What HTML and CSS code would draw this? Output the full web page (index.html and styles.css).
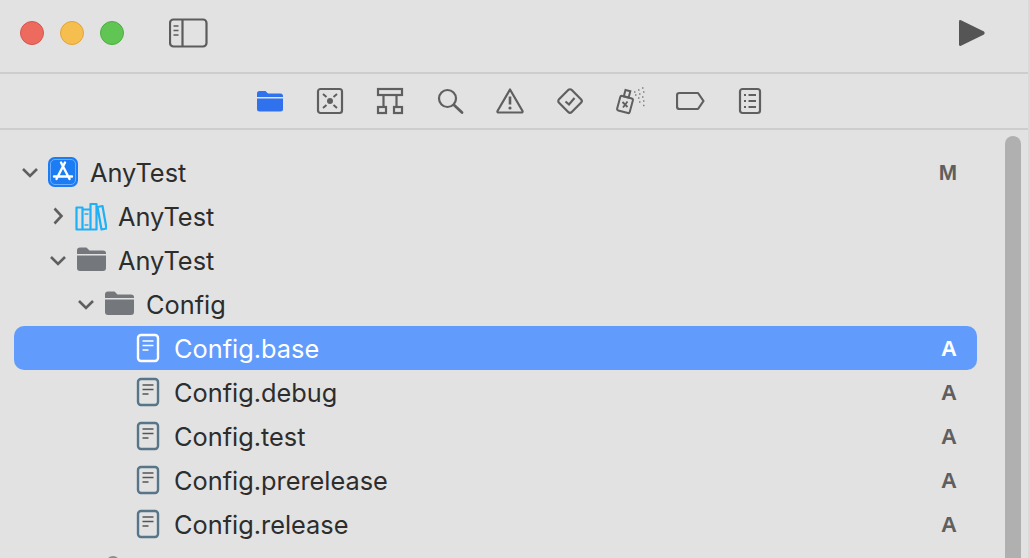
FILE: index.html
```html
<!DOCTYPE html>
<html lang="en">
<head>
<meta charset="utf-8">
<title>AnyTest</title>
<link rel="stylesheet" href="styles.css">
</head>
<body>
<div class="window">
  <header class="titlebar">
    <div class="lights">
      <span class="light red"></span>
      <span class="light yellow"></span>
      <span class="light green"></span>
    </div>
    <svg class="sidebar-toggle" width="40" height="32" viewBox="0 0 40 32" fill="none" stroke="#5c5c5c">
      <rect x="1" y="2.500" width="36.500" height="27" rx="3.500" stroke-width="2.200"/>
      <path d="M13.500 3v26" stroke-width="2.200"/>
      <path d="M4.500 9h5M4.500 13.500h5M4.500 18h5" stroke-width="1.500"/>
    </svg>
    <svg class="play" width="28" height="30" viewBox="0 0 28 30">
      <path d="M1 3.500Q1 1.500 3 2.200L26 13.400Q27.500 15 26 16.500L3 27.800Q1 28.500 1 26.500Z" fill="#555"/>
    </svg>
  </header>
  <nav class="tabs">
    <svg width="28" height="24" viewBox="0 0 28 24"><path d="M1 4.500Q1 2 3.500 2H9.500L12 4.500H24.500Q27 4.500 27 7V8H1Z" fill="#3072ee"/><path d="M1 9.500H27V20Q27 22.500 24.500 22.500H3.500Q1 22.500 1 20Z" fill="#3072ee"/></svg>
    <svg width="28" height="28" viewBox="0 0 28 28" fill="none" stroke="#5f5f5f" stroke-width="2.200"><rect x="2" y="2" width="24" height="24" rx="2.500"/><circle cx="14" cy="14" r="3" fill="#5f5f5f" stroke="none"/><path d="M7 7l3.500 3M21 7l-3.500 3M7 21l3.500-3M21 21l-3.500-3" stroke-width="2"/></svg>
    <svg width="28" height="28" viewBox="0 0 28 28" fill="none" stroke="#5f5f5f" stroke-width="2.200"><rect x="2" y="2" width="24" height="6"/><path d="M7.500 8v12M20.500 8v12"/><rect x="2" y="20" width="8" height="6"/><rect x="18" y="20" width="8" height="6"/></svg>
    <svg width="28" height="28" viewBox="0 0 28 28" fill="none" stroke="#5f5f5f" stroke-width="2.200"><circle cx="11.500" cy="11.500" r="8.500"/><path d="M18 18l8 7.500" stroke-linecap="round" stroke-width="2.800"/></svg>
    <svg width="28" height="28" viewBox="0 0 28 28" fill="none" stroke="#5f5f5f" stroke-width="2.200"><path d="M14 2.500L26.500 24Q27 25.500 25 25.500H3Q1 25.500 1.500 24Z" stroke-linejoin="round"/><path d="M14 9.500v8" stroke-width="2.600"/><circle cx="14" cy="21" r="1.600" fill="#5f5f5f" stroke="none"/></svg>
    <svg width="28" height="28" viewBox="0 0 28 28" fill="none" stroke="#5f5f5f" stroke-width="2.200"><rect x="5" y="5" width="18" height="18" rx="2.500" transform="rotate(45 14 14)"/><path d="M9.500 14.500l3.500 3 5.500-6.500" stroke-width="2.200"/></svg>
    <svg width="30" height="28" viewBox="0 0 30 28" fill="none" stroke="#5f5f5f" stroke-width="2"><rect x="2.500" y="10" width="13" height="15" rx="1.500" transform="rotate(15 9 17.500)"/><rect x="8.500" y="3.500" width="5" height="6.500" transform="rotate(15 11 7)"/><path d="M6.500 15l5 5M11.500 14.500l-4.500 6" stroke-width="1.800"/><path d="M18 5h1.500M22 3h1.500M26 1h1.500M19 8h1.500M23 7h1.500M27 5h1.500M22 11h1.500M26 10h1.500M23 15h1.500M27 14h1.500M27 18.500h1.500" stroke="#808080" stroke-width="1.500"/></svg>
    <svg class="tab-tight" width="30" height="20" viewBox="0 0 30 20" fill="none" stroke="#5f5f5f" stroke-width="2.200"><path d="M3.500 2H22L27.500 10L22 18H3.500Q1 18 1 15.500V4.500Q1 2 3.500 2Z" stroke-linejoin="round"/></svg>
    <svg width="24" height="28" viewBox="0 0 24 28" fill="none" stroke="#5f5f5f" stroke-width="2.200"><rect x="2" y="2" width="20" height="24" rx="2.500"/><path d="M6 8h2M10.500 8H18M6 14h2M10.500 14H18M6 20h2M10.500 20H18" stroke-width="1.800"/></svg>
  </nav>
  <main class="tree">
    <div class="row depth-0">
      <svg class="chev" width="20" height="20" viewBox="0 0 20 20"><path d="M3 7l7 7 7-7" fill="none" stroke="#5f5f5f" stroke-width="2.600"/></svg>
      <svg class="icon" width="32" height="32" viewBox="0 0 32 32"><rect x="1" y="1" width="30" height="30" rx="6.500" fill="#1c7cf4"/><rect x="3.500" y="3.500" width="25" height="25" rx="4.500" fill="none" stroke="#6fadfa" stroke-width="1"/><path d="M18 6.500L9.500 23M14 6.500L22.500 23M7 20.500H25" fill="none" stroke="#fff" stroke-width="2.400" stroke-linecap="round"/></svg>
      <span class="name">AnyTest</span><span class="badge">M</span>
    </div>
    <div class="row depth-1">
      <svg class="chev" width="20" height="20" viewBox="0 0 20 20"><path d="M6.500 2.500l7 7.500-7 7.500" fill="none" stroke="#5f5f5f" stroke-width="2.600"/></svg>
      <svg class="icon" width="32" height="32" viewBox="0 0 32 32" fill="none" stroke="#1fb0f5" stroke-width="2.200"><path d="M1.500 7.500h6v22h-6zM7.500 9.500h8v20h-8zM15.500 4h6v25.500h-6zM22.500 7l5-1 4 22.500-5 1z" stroke-linejoin="round"/><path d="M9.500 14h4M9.500 25h4" stroke-width="1.500"/></svg>
      <span class="name">AnyTest</span>
    </div>
    <div class="row depth-1">
      <svg class="chev" width="20" height="20" viewBox="0 0 20 20"><path d="M3 7l7 7 7-7" fill="none" stroke="#5f5f5f" stroke-width="2.600"/></svg>
      <svg class="icon" width="32" height="32" viewBox="0 0 32 32"><path d="M2 6.500Q2 3.500 5 3.500H11.500L14.500 6.500H28Q31 6.500 31 9V10H2Z" fill="#74787c"/><path d="M2 11.500H31V24Q31 27 28 27H5Q2 27 2 24Z" fill="#74787c"/></svg>
      <span class="name">AnyTest</span>
    </div>
    <div class="row depth-2">
      <svg class="chev" width="20" height="20" viewBox="0 0 20 20"><path d="M3 7l7 7 7-7" fill="none" stroke="#5f5f5f" stroke-width="2.600"/></svg>
      <svg class="icon" width="32" height="32" viewBox="0 0 32 32"><path d="M2 6.500Q2 3.500 5 3.500H11.500L14.500 6.500H28Q31 6.500 31 9V10H2Z" fill="#74787c"/><path d="M2 11.500H31V24Q31 27 28 27H5Q2 27 2 24Z" fill="#74787c"/></svg>
      <span class="name">Config</span>
    </div>
    <div class="row depth-3 selected">
      <svg class="icon doc" width="32" height="32" viewBox="0 0 32 32" fill="none" stroke="#fff"><rect x="6" y="3" width="20" height="26" rx="3" stroke-width="2.400"/><path d="M10.500 9H21.500M10.500 13.500H21.500M10.500 18H16.500" stroke-width="1.600"/></svg>
      <span class="name">Config.base</span><span class="badge">A</span>
    </div>
    <div class="row depth-3">
      <svg class="icon doc" width="32" height="32" viewBox="0 0 32 32" fill="none" stroke="#577588"><rect x="6" y="3" width="20" height="26" rx="3" stroke-width="2.400"/><path d="M10.500 9H21.500M10.500 13.500H21.500M10.500 18H16.500" stroke="#555" stroke-width="1.600"/></svg>
      <span class="name">Config.debug</span><span class="badge">A</span>
    </div>
    <div class="row depth-3">
      <svg class="icon doc" width="32" height="32" viewBox="0 0 32 32" fill="none" stroke="#577588"><rect x="6" y="3" width="20" height="26" rx="3" stroke-width="2.400"/><path d="M10.500 9H21.500M10.500 13.500H21.500M10.500 18H16.500" stroke="#555" stroke-width="1.600"/></svg>
      <span class="name">Config.test</span><span class="badge">A</span>
    </div>
    <div class="row depth-3">
      <svg class="icon doc" width="32" height="32" viewBox="0 0 32 32" fill="none" stroke="#577588"><rect x="6" y="3" width="20" height="26" rx="3" stroke-width="2.400"/><path d="M10.500 9H21.500M10.500 13.500H21.500M10.500 18H16.500" stroke="#555" stroke-width="1.600"/></svg>
      <span class="name">Config.prerelease</span><span class="badge">A</span>
    </div>
    <div class="row depth-3">
      <svg class="icon doc" width="32" height="32" viewBox="0 0 32 32" fill="none" stroke="#577588"><rect x="6" y="3" width="20" height="26" rx="3" stroke-width="2.400"/><path d="M10.500 9H21.500M10.500 13.500H21.500M10.500 18H16.500" stroke="#555" stroke-width="1.600"/></svg>
      <span class="name">Config.release</span><span class="badge">A</span>
    </div>
    <div class="row depth-3 cut">
      <span class="stub"></span>
    </div>
    <div class="scrollbar"></div>
  </main>
</div>
</body>
</html>
```
FILE: styles.css
```css
* { box-sizing: border-box; }
html, body { margin: 0; height: 100%; overflow: hidden; background: #e2e2e2; }
.window {
  position: relative;
  width: 1030px;
  height: 558px;
  overflow: hidden;
  display: flex;
  flex-direction: column;
  border-right: 2px solid #d9d9d9;
  font-family: Inter, "Liberation Sans", sans-serif;
  color: #2d2d2d;
}
.titlebar {
  height: 74px;
  flex: none;
  display: flex;
  align-items: center;
  padding: 0 42px 6px 20px;
  border-bottom: 2px solid #cdcdcd;
}
.lights { display: flex; gap: 16px; }
.light { width: 24px; height: 24px; border-radius: 50%; border: 1px solid; }
.red { background: #ed6a5f; border-color: #d5564c; }
.yellow { background: #f6be4f; border-color: #dfa53b; }
.green { background: #61c554; border-color: #4dad42; }
.sidebar-toggle { margin-left: 45px; }
.play { margin-left: auto; }
.tabs {
  height: 56px;
  flex: none;
  display: flex;
  align-items: center;
  justify-content: center;
  gap: 32px;
  padding: 0 11px 0 0;
  border-bottom: 2px solid #cdcdcd;
}
.tab-tight { margin-left: -2px; }
.tree {
  position: relative;
  flex: 1;
  padding: 20px 53px 0 14px;
}
.row {
  height: 44px;
  display: flex;
  align-items: center;
  border-radius: 10px;
  width: 963px;
  padding-right: 20px;
}
.depth-0 { padding-left: 6px; }
.depth-1 { padding-left: 34px; }
.depth-2 { padding-left: 62px; }
.depth-3 { padding-left: 118px; }
.chev { flex: none; width: 20px; margin-right: 7px; }
.icon { flex: none; margin-right: 11px; }
.doc { margin-right: 10px; }
.name { font-size: 25.35px; line-height: 30px; padding-top: 2px; }
.badge {
  margin-left: auto;
  padding-top: 2px;
  font-size: 22px;
  font-weight: 700;
  color: #5f5f5f;
  font-family: "Liberation Sans", sans-serif;
}
.selected { background: #619bfc; color: #fff; }
.selected .badge { color: #fff; }
.cut { align-items: flex-start; }
.stub {
  display: block;
  width: 14px;
  height: 14px;
  margin: 10px 0 0 -26px;
  border-radius: 50%;
  background: #8b8d90;
}
.scrollbar {
  position: absolute;
  left: 1005px;
  top: 6px;
  width: 16px;
  height: 500px;
  border-radius: 8px;
  background: #b0b0b0;
}
```
